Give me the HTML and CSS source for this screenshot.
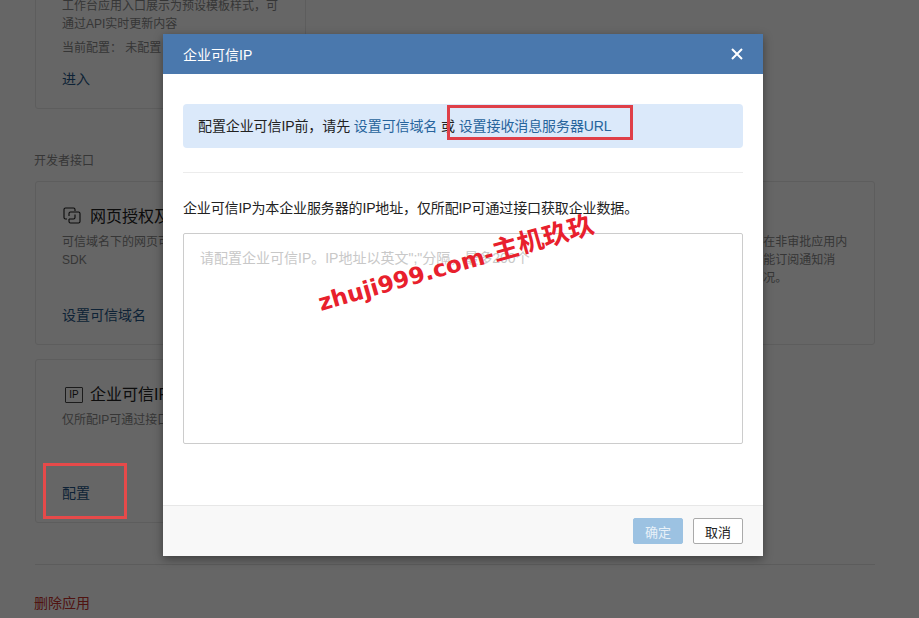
FILE: index.html
```html
<!DOCTYPE html>
<html lang="zh-CN">
<head>
<meta charset="utf-8">
<title>企业可信IP</title>
<link rel="stylesheet" href="styles.css">
</head>
<body>
<main class="page">
  <section class="grid grid-first">
    <article class="card">
      <h3 class="card-title">工作台自定义展示</h3>
      <p class="card-desc">工作台应用入口展示为预设模板样式，可<br>通过API实时更新内容</p>
      <p class="card-desc card-status">当前配置： 未配置</p>
      <a class="card-link">进入</a>
    </article>
  </section>
  <h2 class="section-title">开发者接口</h2>
  <section class="grid">
    <article class="card">
      <h3 class="card-title">
        <svg class="icon" viewBox="0 0 18 18" fill="none" stroke="#1a1a1a" stroke-width="1.1"><path d="M4 12H2.5A1.5 1.5 0 0 1 1 10.5V2.5A1.5 1.5 0 0 1 2.5 1H10.5A1.5 1.5 0 0 1 12 2.5V4"/><path d="M6 9V6.5A1.5 1.5 0 0 1 7.5 5H15.5A1.5 1.5 0 0 1 17 6.5V14.5A1.5 1.5 0 0 1 15.5 16H7.5A1.5 1.5 0 0 1 6 14.5V12"/><path d="M6 12H10.5A1.5 1.5 0 0 0 12 10.5V7.5"/></svg>
        网页授权及JS-SDK
      </h3>
      <p class="card-desc">可信域名下的网页可调用网页授权及JS-<br>SDK</p>
      <a class="card-link">设置可信域名</a>
    </article>
    <article class="card">
      <h3 class="card-title">企业微信授权登录</h3>
      <p class="card-desc">可在网页内使用企业微信授权登录</p>
      <a class="card-link">设置</a>
    </article>
    <article class="card">
      <h3 class="card-title">接收消息</h3>
      <p class="card-desc">设置后可接收消息与事件在非审批应用内<br>应用也可获取审批数据，能订阅通知消<br>息，及时了解审批进展情况。</p>
      <a class="card-link">设置接收消息</a>
    </article>
    <article class="card">
      <h3 class="card-title"><span class="ip-icon">IP</span>企业可信IP</h3>
      <p class="card-desc">仅所配IP可通过接口获取企业数据</p>
      <a class="card-link">配置</a>
    </article>
  </section>
  <hr class="page-rule">
  <a class="danger-link">删除应用</a>
</main>

<div class="overlay"></div>

<div class="modal" role="dialog">
  <header class="modal-head">
    <span>企业可信IP</span>
    <svg class="close" viewBox="0 0 12 12" fill="none" stroke="#fff" stroke-width="2"><path d="M1 1l10 10M11 1L1 11"/></svg>
  </header>
  <div class="modal-body">
    <div class="alert">配置企业可信IP前，请先 <a>设置可信域名</a> 或 <a>设置接收消息服务器URL</a></div>
    <hr class="modal-rule">
    <p class="modal-desc">企业可信IP为本企业服务器的IP地址，仅所配IP可通过接口获取企业数据。</p>
    <textarea class="ip-input" placeholder="请配置企业可信IP。IP地址以英文&quot;;&quot;分隔，最多200个"></textarea>
  </div>
  <footer class="modal-foot">
    <button class="btn btn-primary">确定</button>
    <button class="btn">取消</button>
  </footer>
</div>

<div class="mark mark-url"></div>
<div class="mark mark-config"></div>
<div class="watermark">zhuji999.com-<span class="watermark-cjk">主机玖玖</span></div>
</body>
</html>
```
FILE: styles.css
```css
* { box-sizing: border-box; }
html, body { margin: 0; height: 618px; overflow: hidden; }
body {
  position: relative;
  background: #fff;
  font-family: "Liberation Sans", "Noto Sans CJK SC", sans-serif;
  font-size: 12px;
  color: #222;
}
.page { width: 840px; margin: -55px 0 0 35px; }
.grid { display: grid; grid-template-columns: repeat(3, 1fr); gap: 14px; }
.card {
  display: flex;
  flex-direction: column;
  height: 164px;
  padding: 26px 26px 19px;
  border: 1px solid #e8e8e8;
  border-radius: 3px;
}
.card-title {
  display: flex;
  align-items: center;
  gap: 9px;
  height: 18px;
  margin: 0 0 7px;
  font-size: 16px;
  font-weight: 400;
  line-height: 18px;
  color: #222;
}
.icon { width: 18px; height: 18px; flex: none; margin: -3px 0 0 1px; }
.ip-icon {
  flex: none;
  width: 18px;
  height: 16px;
  margin: 0 -2px 0 3px;
  border: 1px solid #444;
  border-radius: 1px;
  font-size: 10px;
  line-height: 14px;
  text-align: center;
}
.card-desc { margin: 0; font-size: 12px; line-height: 18px; color: #888; }
.card-status { margin-top: 6px; }
.card-link { margin-top: auto; font-size: 14px; line-height: 20px; color: #245688; }
.section-title { margin: 43px 0 11px -1px; font-size: 12px; font-weight: 400; line-height: 18px; color: #888; }
.page-rule { height: 1px; margin: 41px 0 28px; border: 0; background: #e6e6e6; }
.danger-link { display: block; margin-left: -1px; font-size: 14px; line-height: 20px; color: #c9302c; }

.overlay { position: absolute; inset: 0; background: rgba(0, 0, 0, .6); }

.modal {
  position: absolute;
  left: 163px;
  top: 34px;
  display: flex;
  flex-direction: column;
  width: 600px;
  height: 522px;
  background: #fff;
  box-shadow: 0 3px 9px rgba(0, 0, 0, .4);
}
.modal-head {
  display: flex;
  align-items: center;
  justify-content: space-between;
  flex: none;
  height: 40px;
  padding: 0 20px;
  background: #4a78ad;
  color: #fff;
  font-size: 14px;
}
.close { width: 12px; height: 12px; }
.modal-body { flex: 1; padding: 30px 20px 0; }
.alert {
  height: 44px;
  padding-left: 15px;
  border-radius: 4px;
  background: #dbe9fa;
  font-size: 14px;
  letter-spacing: -.1px;
  line-height: 44px;
  color: #222;
}
.alert a { color: #27649c; }
.modal-rule { height: 1px; margin: 24px 0 26px; border: 0; background: #ececec; }
.modal-desc { margin: 0 0 15px; font-size: 14px; letter-spacing: -.13px; line-height: 19px; color: #222; }
.ip-input {
  display: block;
  width: 100%;
  height: 211px;
  padding: 14px 16px;
  border: 1px solid #ccc;
  border-radius: 2px;
  outline: 0;
  resize: none;
  font-family: inherit;
  font-size: 14px;
  line-height: 20px;
}
.ip-input::placeholder { color: #c8c8c8; opacity: 1; }
.modal-foot {
  display: flex;
  justify-content: flex-end;
  gap: 10px;
  flex: none;
  height: 51px;
  padding: 12px 20px 0;
  border-top: 1px solid #e7e7e7;
  background: #f8f8f8;
}
.btn {
  width: 50px;
  height: 26px;
  padding: 0;
  border: 1px solid #aaa;
  border-radius: 2px;
  background: #fff;
  font-family: inherit;
  font-size: 13px;
  color: #222;
}
.btn-primary { border-color: #9cc2e2; background: #9cc2e2; color: #e8f1f8; }

.mark { position: absolute; border: 3px solid #df3f48; }
.mark-url { left: 447px; top: 105px; width: 186px; height: 35px; }
.mark-config { left: 43px; top: 463px; width: 84px; height: 56px; border-color: #e64a4a; }

.watermark {
  position: absolute;
  left: 313px;
  top: 250px;
  font-family: "DejaVu Sans", "Noto Sans CJK SC", sans-serif;
  font-size: 23px;
  font-weight: 700;
  line-height: 26px;
  white-space: nowrap;
  color: #e8202c;
  transform: rotate(-16deg);
}
.watermark-cjk { font-size: 26px; }
```
